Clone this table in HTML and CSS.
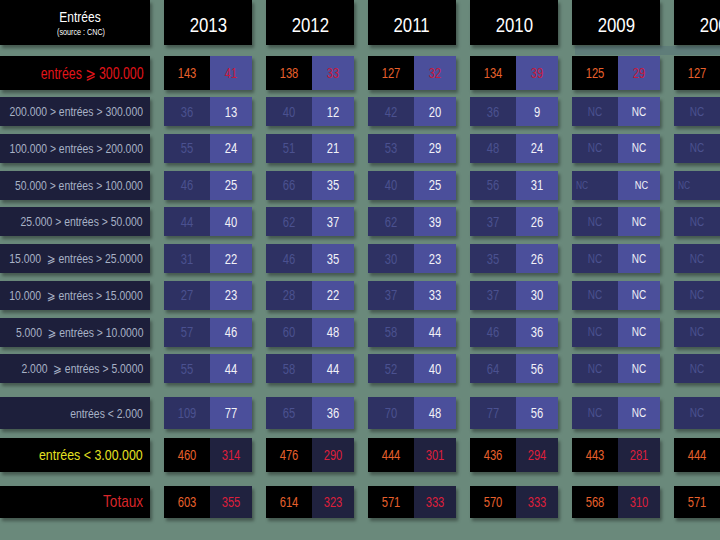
FILE: index.html
```html
<!DOCTYPE html>
<html lang="fr">
<head>
<meta charset="utf-8">
<title>Entrées (source : CNC)</title>
<link rel="stylesheet" href="styles.css">
</head>
<body>
<div class="slide">
  <div class="band"></div>
  <div class="row head">
    <div class="label hl"><span class="t1">Entrées</span><span class="t2">(source : CNC)</span></div>
    <div class="year"><span>2013</span></div><div class="year"><span>2012</span></div><div class="year"><span>2011</span></div><div class="year"><span>2010</span></div><div class="year"><span>2009</span></div><div class="year"><span>2008</span></div>
  </div>

  <div class="row r-top">
    <div class="label"><span>entrées ⩾ 300.000</span></div>
    <div class="cell"><span class="a">143</span><span class="b">41</span></div>
    <div class="cell"><span class="a">138</span><span class="b">33</span></div>
    <div class="cell"><span class="a">127</span><span class="b">32</span></div>
    <div class="cell"><span class="a">134</span><span class="b">39</span></div>
    <div class="cell"><span class="a">125</span><span class="b">29</span></div>
    <div class="cell"><span class="a">127</span><span class="b"></span></div>
  </div>

  <div class="mid">
    <div class="row r-mid">
      <div class="label"><span>200.000 &gt; entrées &gt; 300.000</span></div>
      <div class="cell"><span class="a">36</span><span class="b">13</span></div>
      <div class="cell"><span class="a">40</span><span class="b">12</span></div>
      <div class="cell"><span class="a">42</span><span class="b">20</span></div>
      <div class="cell"><span class="a">36</span><span class="b">9</span></div>
      <div class="cell nc"><span class="a">NC</span><span class="b">NC</span></div>
      <div class="cell nc"><span class="a">NC</span><span class="b">NC</span></div>
    </div>
    <div class="row r-mid">
      <div class="label"><span>100.000 &gt; entrées &gt; 200.000</span></div>
      <div class="cell"><span class="a">55</span><span class="b">24</span></div>
      <div class="cell"><span class="a">51</span><span class="b">21</span></div>
      <div class="cell"><span class="a">53</span><span class="b">29</span></div>
      <div class="cell"><span class="a">48</span><span class="b">24</span></div>
      <div class="cell nc"><span class="a">NC</span><span class="b">NC</span></div>
      <div class="cell nc"><span class="a">NC</span><span class="b">NC</span></div>
    </div>
    <div class="row r-mid">
      <div class="label"><span>50.000 &gt; entrées &gt; 100.000</span></div>
      <div class="cell"><span class="a">46</span><span class="b">25</span></div>
      <div class="cell"><span class="a">66</span><span class="b">35</span></div>
      <div class="cell"><span class="a">40</span><span class="b">25</span></div>
      <div class="cell"><span class="a">56</span><span class="b">31</span></div>
      <div class="cell nc small"><span class="a">NC</span><span class="b">NC</span></div>
      <div class="cell nc small"><span class="a">NC</span><span class="b">NC</span></div>
    </div>
    <div class="row r-mid">
      <div class="label"><span>25.000 &gt; entrées &gt; 50.000</span></div>
      <div class="cell"><span class="a">44</span><span class="b">40</span></div>
      <div class="cell"><span class="a">62</span><span class="b">37</span></div>
      <div class="cell"><span class="a">62</span><span class="b">39</span></div>
      <div class="cell"><span class="a">37</span><span class="b">26</span></div>
      <div class="cell nc"><span class="a">NC</span><span class="b">NC</span></div>
      <div class="cell nc"><span class="a">NC</span><span class="b">NC</span></div>
    </div>
    <div class="row r-mid">
      <div class="label"><span>15.000  ⩾ entrées &gt; 25.0000</span></div>
      <div class="cell"><span class="a">31</span><span class="b">22</span></div>
      <div class="cell"><span class="a">46</span><span class="b">35</span></div>
      <div class="cell"><span class="a">30</span><span class="b">23</span></div>
      <div class="cell"><span class="a">35</span><span class="b">26</span></div>
      <div class="cell nc"><span class="a">NC</span><span class="b">NC</span></div>
      <div class="cell nc"><span class="a">NC</span><span class="b">NC</span></div>
    </div>
    <div class="row r-mid">
      <div class="label"><span>10.000  ⩾ entrées &gt; 15.0000</span></div>
      <div class="cell"><span class="a">27</span><span class="b">23</span></div>
      <div class="cell"><span class="a">28</span><span class="b">22</span></div>
      <div class="cell"><span class="a">37</span><span class="b">33</span></div>
      <div class="cell"><span class="a">37</span><span class="b">30</span></div>
      <div class="cell nc"><span class="a">NC</span><span class="b">NC</span></div>
      <div class="cell nc"><span class="a">NC</span><span class="b">NC</span></div>
    </div>
    <div class="row r-mid">
      <div class="label"><span>5.000  ⩾ entrées &gt; 10.0000</span></div>
      <div class="cell"><span class="a">57</span><span class="b">46</span></div>
      <div class="cell"><span class="a">60</span><span class="b">48</span></div>
      <div class="cell"><span class="a">58</span><span class="b">44</span></div>
      <div class="cell"><span class="a">46</span><span class="b">36</span></div>
      <div class="cell nc"><span class="a">NC</span><span class="b">NC</span></div>
      <div class="cell nc"><span class="a">NC</span><span class="b">NC</span></div>
    </div>
    <div class="row r-mid">
      <div class="label"><span>2.000  ⩾ entrées &gt; 5.0000</span></div>
      <div class="cell"><span class="a">55</span><span class="b">44</span></div>
      <div class="cell"><span class="a">58</span><span class="b">44</span></div>
      <div class="cell"><span class="a">52</span><span class="b">40</span></div>
      <div class="cell"><span class="a">64</span><span class="b">56</span></div>
      <div class="cell nc"><span class="a">NC</span><span class="b">NC</span></div>
      <div class="cell nc"><span class="a">NC</span><span class="b">NC</span></div>
    </div>
  </div>

  <div class="row r-mid r-last">
    <div class="label"><span>entrées &lt; 2.000</span></div>
    <div class="cell"><span class="a">109</span><span class="b">77</span></div>
    <div class="cell"><span class="a">65</span><span class="b">36</span></div>
    <div class="cell"><span class="a">70</span><span class="b">48</span></div>
    <div class="cell"><span class="a">77</span><span class="b">56</span></div>
    <div class="cell nc"><span class="a">NC</span><span class="b">NC</span></div>
    <div class="cell nc"><span class="a">NC</span><span class="b">NC</span></div>
  </div>

  <div class="row r-sum">
    <div class="label yellow"><span>entrées &lt; 3.00.000</span></div>
    <div class="cell"><span class="a">460</span><span class="b">314</span></div>
    <div class="cell"><span class="a">476</span><span class="b">290</span></div>
    <div class="cell"><span class="a">444</span><span class="b">301</span></div>
    <div class="cell"><span class="a">436</span><span class="b">294</span></div>
    <div class="cell"><span class="a">443</span><span class="b">281</span></div>
    <div class="cell"><span class="a">444</span><span class="b"></span></div>
  </div>

  <div class="row r-sum r-tot">
    <div class="label red"><span>Totaux</span></div>
    <div class="cell"><span class="a">603</span><span class="b">355</span></div>
    <div class="cell"><span class="a">614</span><span class="b">323</span></div>
    <div class="cell"><span class="a">571</span><span class="b">333</span></div>
    <div class="cell"><span class="a">570</span><span class="b">333</span></div>
    <div class="cell"><span class="a">568</span><span class="b">310</span></div>
    <div class="cell"><span class="a">571</span><span class="b"></span></div>
  </div>
</div>
</body>
</html>
```
FILE: styles.css
```css
html, body {
  margin: 0;
  padding: 0;
  background: #6a897b;
}
body {
  width: 720px;
  height: 540px;
  overflow: hidden;
  font-family: "Liberation Sans", "DejaVu Sans", sans-serif;
}
.slide {
  position: relative;
  width: 720px;
  height: 540px;
  display: flex;
  flex-direction: column;
  overflow: hidden;
}
.band {
  position: absolute;
  left: 575px;
  top: 46px;
  width: 145px;
  height: 9px;
  background: rgba(70, 95, 120, 0.28);
}
.row {
  display: flex;
  gap: 14px;
  flex: none;
}

/* label column */
.label {
  width: 150px;
  flex: none;
  box-sizing: border-box;
  padding-right: 7px;
  display: flex;
  align-items: center;
  justify-content: flex-end;
  background: #1d1f3b;
  color: #a8b2c6;
  font-size: 13px;
  white-space: pre;
  box-shadow: 2px 3px 3px rgba(0, 0, 0, 0.35);
}
.label > span {
  display: inline-block;
  flex: none;
  transform: scaleX(0.8);
  transform-origin: right center;
}

/* data cells */
.cell {
  width: 88px;
  flex: none;
  display: flex;
  box-shadow: 2px 3px 3px rgba(0, 0, 0, 0.35);
  font-size: 14px;
  background: linear-gradient(to right, var(--ca) 0 46px, var(--cb) 46px 100%);
}
.cell .a, .cell .b {
  display: flex;
  align-items: center;
  justify-content: center;
  transform: scaleX(0.8);
}
.cell .a { width: 46px; flex: none; }
.cell .b { flex: 1; }

/* header */
.head { height: 45px; }
.head .label, .year {
  background: #000;
  color: #fff;
}
.hl {
  flex-direction: column;
  justify-content: center;
  align-items: center;
  padding: 2px 0 0;
  gap: 4px;
}
.hl .t1 {
  font-size: 15px;
  line-height: 14px;
  display: block;
  transform: scaleX(0.8);
}
.hl .t2 {
  font-size: 9px;
  line-height: 9px;
  display: block;
  transform: scaleX(0.8);
}
.year {
  width: 88px;
  flex: none;
  display: flex;
  align-items: center;
  justify-content: center;
  padding-top: 5px;
  box-sizing: border-box;
  font-size: 21px;
  box-shadow: 2px 3px 3px rgba(0, 0, 0, 0.35);
}
.year span {
  display: inline-block;
  transform: scaleX(0.8);
}

/* top row */
.r-top {
  height: 34px;
  margin-top: 11px;
}
.r-top .label {
  background: #000;
  color: #e3141a;
  font-size: 16px;
}
.r-top .label > span { transform: scaleX(0.77); }
.r-top .cell { --ca: #000; --cb: #4b4f9b; }
.r-top .a { color: #e8602c; }
.r-top .b { color: #c8183c; }

/* middle rows */
.mid {
  display: flex;
  flex-direction: column;
  gap: 7.75px;
  margin-top: 7px;
}
.r-mid { height: 29px; }
.r-mid .cell { --ca: #2e3163; --cb: #4b4f9b; }
.r-mid .a { color: #4b5190; }
.r-mid .b { color: #f2f2f8; }
.r-mid .cell.nc { font-size: 12.5px; }
.r-mid .cell.small .a {
  font-size: 10.5px;
  justify-content: flex-start;
  padding-left: 5px;
  transform-origin: left center;
}
.r-mid .cell.small .b { font-size: 11.5px; }
.r-last {
  height: 32px;
  margin-top: 14px;
}

/* sums */
.r-sum {
  height: 34px;
  margin-top: 9px;
}
.r-sum .label { background: #000; font-size: 15.5px; }
.r-sum .cell { --ca: #000; --cb: #20223f; }
.r-sum .a { color: #e8602c; }
.r-sum .b { color: #dd1f3c; }
.r-tot {
  height: 32px;
  margin-top: 14px;
}
.label.yellow { color: #e6e021; }
.label.red { color: #d8262a; font-size: 17px; }
```
